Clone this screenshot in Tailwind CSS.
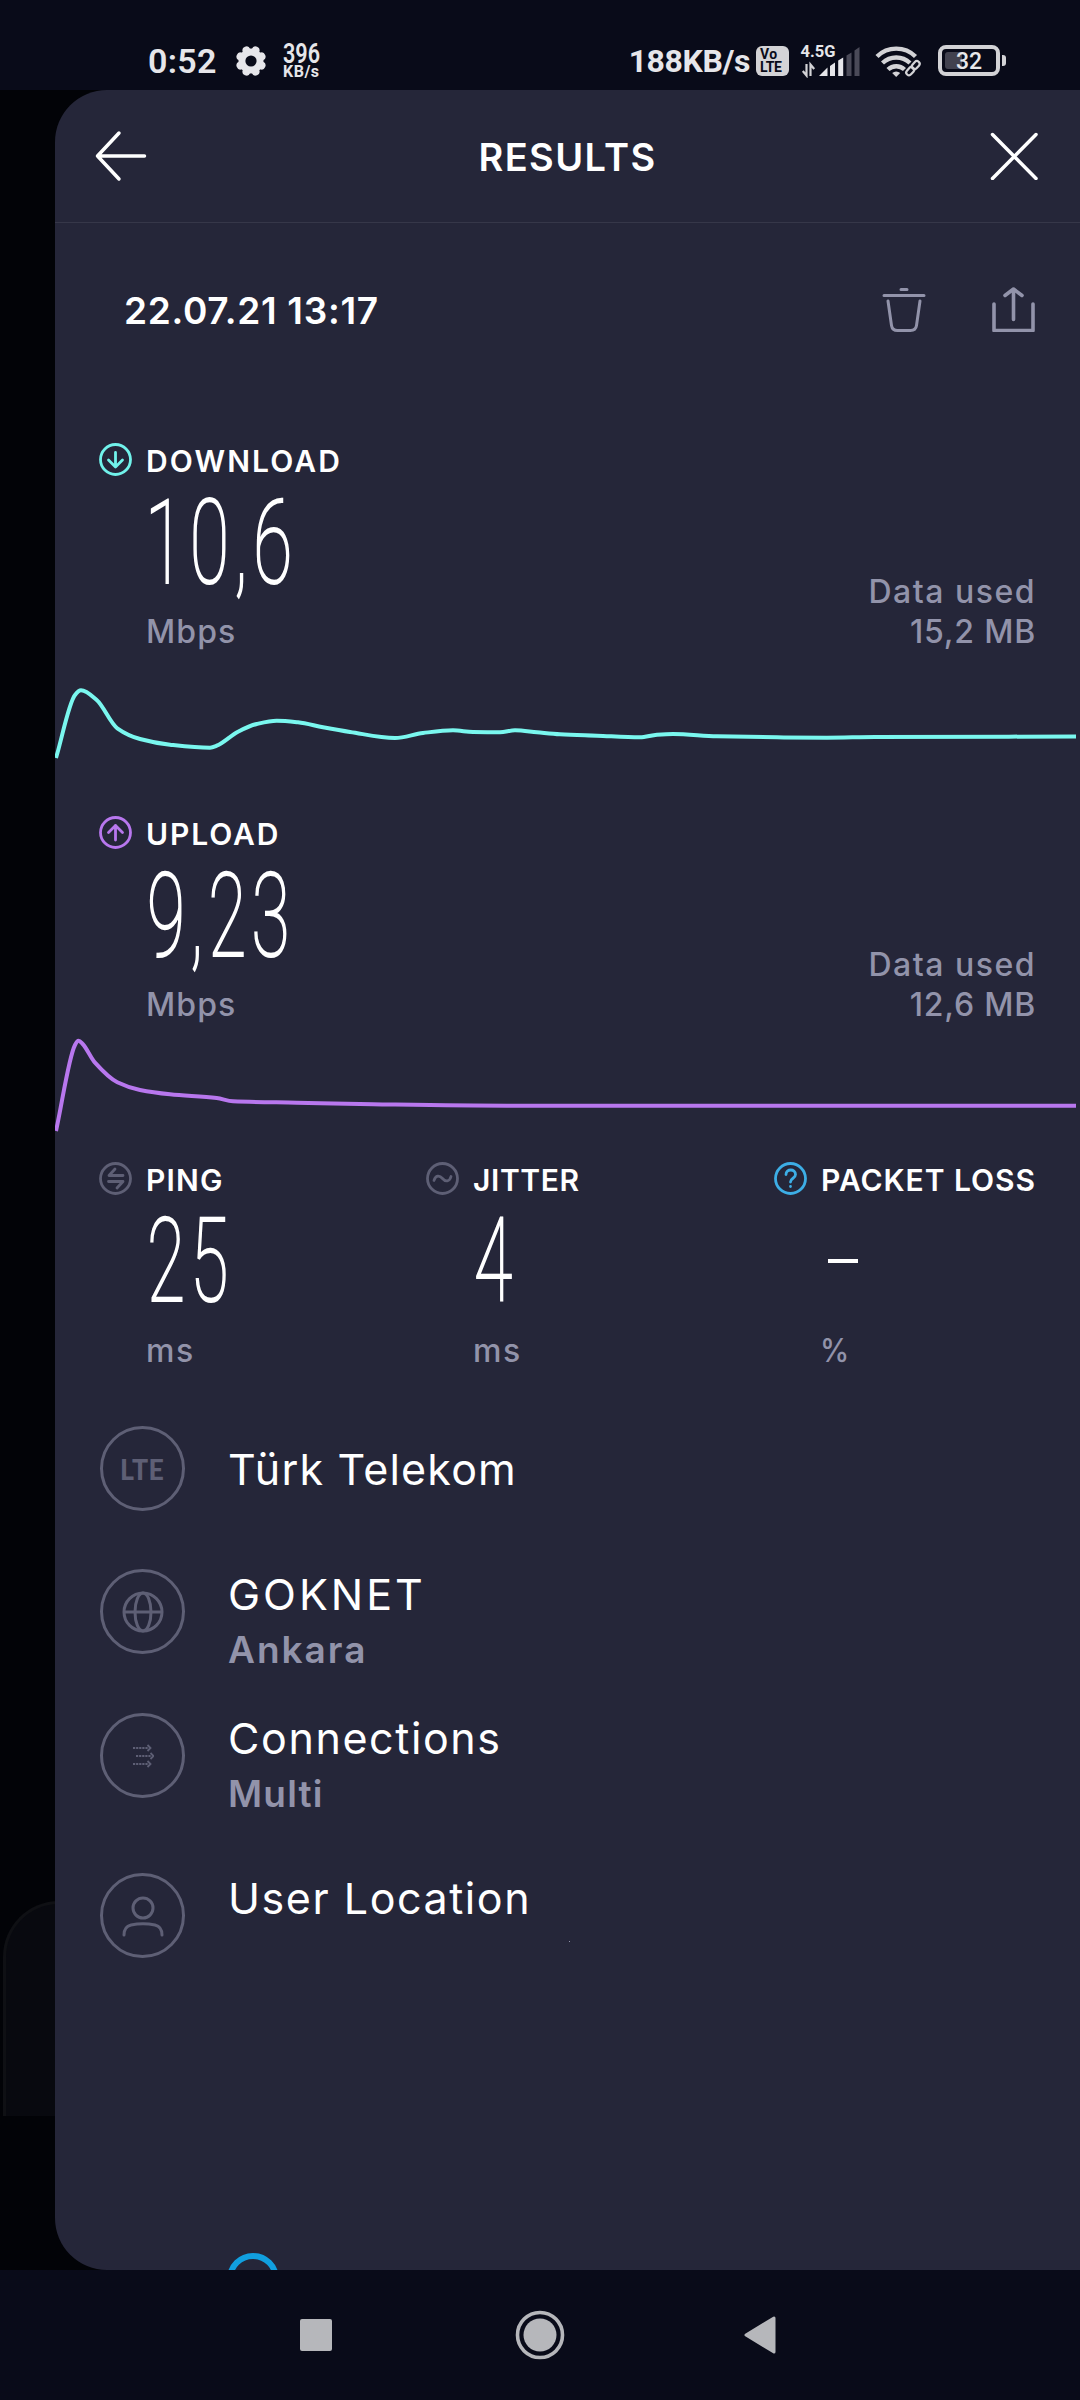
<!DOCTYPE html>
<html lang="en">
<head>
    <meta charset="UTF-8" />
    <meta name="viewport" content="width=device-width, initial-scale=1.0" />
    <title>Results</title>
    <script src="https://cdn.jsdelivr.net/npm/@tailwindcss/browser@4"></script>
</head>
<body class="w-[1080px] h-[2400px] overflow-hidden bg-[#090b19] text-white font-['Inter',sans-serif] flex flex-col">

<!-- Status bar -->
<div class="h-[90px] shrink-0 flex items-center justify-between pt-[31px] pl-[148px] pr-[74px] text-[#e6e6ea] font-['Roboto',sans-serif]">
    <div class="flex items-center">
        <span class="text-[34px] leading-none font-semibold w-[87px] tracking-[0.3px]">0:52</span>
        <svg class="w-8 h-8" viewBox="0 0 32 32">
            <g stroke="#e6e6ea" stroke-width="8" stroke-linecap="round">
                <path d="M11.500 5.500l9 21M20.500 5.500l-9 21M5.500 11.500l21 9M26.500 11.500l-21 9" />
            </g>
            <circle cx="16" cy="16" r="12.500" fill="#e6e6ea" />
            <circle cx="16" cy="16" r="5.600" fill="#090b19" />
        </svg>
        <div class="ml-4 w-[36px] flex flex-col">
            <span class="text-[27px] leading-[22px] font-semibold origin-left scale-x-[0.8]">396</span>
            <span class="text-[16px] leading-[14px] font-bold tracking-[0.5px]">KB/s</span>
        </div>
    </div>

    <div class="flex items-center">
        <span class="text-[32px] leading-none font-bold tracking-[-0.4px]">188KB/s</span>
        <!-- VoLTE -->
        <div class="ml-[6px] w-[33px] h-[30px] rounded-[6px] bg-[#d3d3d6] text-[#090b19] text-[14px] leading-[13px] font-bold flex flex-col justify-center pl-[4px]">
            <span class="tracking-[0.5px]">Vo</span>
            <span class="tracking-[-0.3px]">LTE</span>
        </div>
        <!-- Mobile signal -->
        <svg class="ml-[11px] w-[62px] h-[34px]" viewBox="0 0 62 34">
            <text x="0.500" y="13" font-size="16.500" font-weight="700" fill="#e6e6ea">4.5G</text>
            <g fill="none" stroke="#d3d3d6" stroke-width="2.200">
                <path d="M6.500 20v11.500L2.800 27M10.500 32V20.500l3.700 4.500" />
            </g>
            <path d="M19 32l8.500-8.500V32z" fill="#e6e6ea" />
            <path d="M30 32V22l5-3.500V32zM38.200 32V16.500l5-3V32z" fill="#e6e6ea" />
            <path d="M46.500 32V11.500l5-3V32zM54.500 32V6.500l5-3.500V32z" fill="#4a4a58" />
        </svg>
        <!-- Wifi -->
        <svg class="ml-[13px] w-[50px] h-[34px]" viewBox="0 0 50 34" fill="none" stroke="#d3d3d6">
            <path d="M2 12.500a27.500 27.500 0 0 1 38.500 0M7.500 19a20 20 0 0 1 27.500 0M13 25.500a12 12 0 0 1 16.500 0" stroke-width="4.400" />
            <path d="M21.200 33l-4-4a6 6 0 0 1 8 0z" fill="#d3d3d6" stroke="none" />
            <path d="M34 30l10-10" stroke="#090b19" stroke-width="6" />
            <g stroke-width="2.200">
                <rect x="30.500" y="24.500" width="9" height="5.500" rx="2.700" transform="rotate(-48 35 27)" />
                <rect x="36" y="18.500" width="9" height="5.500" rx="2.700" transform="rotate(-48 40.500 21)" />
            </g>
        </svg>
        <!-- Battery -->
        <div class="ml-[13px] w-[62px] h-[31px] rounded-[8px] border-4 border-[#d3d3d6] p-[3px] relative">
            <div class="w-[17px] h-full rounded-[3px] bg-[#42424f]"></div>
            <span class="absolute inset-0 flex items-center justify-center pt-px text-[23px] leading-none font-medium">32</span>
        </div>
        <div class="ml-[2px] w-[4px] h-[11px] rounded-r-[3px] bg-[#d3d3d6]"></div>
    </div>
</div>

<!-- Main area -->
<main class="h-[2180px] shrink-0 bg-[#020307] pl-[55px] relative">
    <!-- Card of the screen underneath -->
    <div class="absolute left-[3px] top-[1811px] w-[120px] h-[215px] rounded-tl-[56px] border-l-[3px] border-t-[3px] border-[#0f1014] bg-[#08090f]"></div>

    <div class="relative h-full bg-[#252639] rounded-l-[52px] overflow-hidden">
        <header class="h-[133px] flex items-center justify-between pl-[40px] pr-[42px] border-b border-[#363749]">
            <svg class="w-[52px] h-[52px] -mt-px" viewBox="0 0 52 52" fill="none" stroke="#fff" stroke-width="3.500" stroke-linecap="round" stroke-linejoin="round">
                <path d="M49.500 26H2.500M24 3L2.500 26 24 49" />
            </svg>
            <h1 class="text-[38px] leading-none font-semibold tracking-[1.41px] pt-[2px] -ml-[2px]">RESULTS</h1>
            <svg class="w-[48px] h-[48px] -mt-px" viewBox="0 0 48 48" fill="none" stroke="#fff" stroke-width="3.500" stroke-linecap="round">
                <path d="M2.500 2.500l43.500 44M46 2.500L2.500 46.500" />
            </svg>
        </header>

        <div class="mt-[57px] h-[60px] flex items-center pl-[69px] pr-[45px]">
            <span class="flex-1 text-[37px] leading-none font-semibold tracking-[0.7px] pt-px">22.07.21 13:17</span>
            <svg class="w-[44px] h-[45px] -mt-px" viewBox="0 0 44 45" fill="none" stroke="#9293aa" stroke-width="3" stroke-linecap="round" stroke-linejoin="round">
                <path d="M19 2.500h6M2 8.500h40M6 14l3.500 24.500q.8 5 6 5h13q5.200 0 6-5L38 14" />
            </svg>
            <svg class="ml-[66px] w-[43px] h-[45px] -mt-px" viewBox="0 0 43 45" fill="none" stroke="#9293aa" stroke-width="3.600" stroke-linecap="round" stroke-linejoin="round">
                <path d="M2 17v26.500h39V17M21.500 32.500V2.500M13 8.500l8.500-6.500 8.500 6.500" />
            </svg>
        </div>

        <!-- Download -->
        <section class="mt-[102px]">
            <div class="h-[34px] flex items-center gap-[14px] pl-[44px]">
                <svg class="w-[33px] h-[33px]" viewBox="0 0 33 33" fill="none" stroke="#71f2eb" stroke-width="2.800" stroke-linecap="round" stroke-linejoin="round">
                    <circle cx="16.500" cy="16.500" r="15" /><path d="M16.500 9.500v14M9.500 17l7 7 7-7" />
                </svg>
                <h2 class="text-[30px] leading-none font-semibold tracking-[2.1px] pt-[3px]">DOWNLOAD</h2>
            </div>
            <div class="h-[176px] flex justify-between items-end pl-[93px] pr-[44px]">
                <div>
                    <div class="h-[84px] mb-[28px] leading-[86px] text-[116px] tracking-[8.500px] font-thin [-webkit-text-stroke:2.2px_#fff] font-['Roboto',sans-serif] origin-left scale-x-[0.62] -ml-[3px]">10,6</div>
                    <div class="text-[32px] leading-10 font-medium tracking-[1.1px] text-[#9293aa] -ml-[2px]">Mbps</div>
                </div>
                <div class="text-right text-[32px] leading-10 font-medium text-[#9293aa]">
                    <div class="tracking-[1.5px]">Data used</div>
                    <div class="tracking-[0.8px]">15,2 MB</div>
                </div>
            </div>
            <svg class="block w-full h-[163px]" viewBox="0 1 1025 163" fill="none" stroke="#7af7ef" stroke-width="4">
                <path id="downloadLine" />
            </svg>
        </section>

        <!-- Upload -->
        <section>
            <div class="h-[34px] flex items-center gap-[14px] pl-[44px]">
                <svg class="w-[33px] h-[33px]" viewBox="0 0 33 33" fill="none" stroke="#b877ee" stroke-width="2.800" stroke-linecap="round" stroke-linejoin="round">
                    <circle cx="16.500" cy="16.500" r="15" /><path d="M16.500 24V9.500M9.500 16.500l7-7 7 7" />
                </svg>
                <h2 class="text-[30px] leading-none font-semibold tracking-[1.9px] pt-[3px]">UPLOAD</h2>
            </div>
            <div class="h-[176px] flex justify-between items-end pl-[93px] pr-[44px]">
                <div>
                    <div class="h-[84px] mb-[28px] leading-[86px] text-[116px] tracking-[8.500px] font-thin [-webkit-text-stroke:2.2px_#fff] font-['Roboto',sans-serif] origin-left scale-x-[0.6] -ml-px">9,23</div>
                    <div class="text-[32px] leading-10 font-medium tracking-[1.1px] text-[#9293aa] -ml-[2px]">Mbps</div>
                </div>
                <div class="text-right text-[32px] leading-10 font-medium text-[#9293aa]">
                    <div class="tracking-[1.5px]">Data used</div>
                    <div class="tracking-[0.8px]">12,6 MB</div>
                </div>
            </div>
            <svg class="block w-full h-[136px]" viewBox="0 1 1025 136" fill="none" stroke="#b877ee" stroke-width="4">
                <path id="uploadLine" />
            </svg>
        </section>

        <!-- Ping / jitter / packet loss -->
        <section class="grid grid-cols-[327px_348px_1fr] pl-[44px]">
            <div>
                <div class="h-[34px] flex items-center gap-[14px]">
                    <svg class="w-[33px] h-[33px]" viewBox="0 0 33 33" fill="none" stroke="#5e5f75" stroke-width="2.800" stroke-linecap="round" stroke-linejoin="round">
                        <circle cx="16.500" cy="16.500" r="15" /><path d="M24 13.500H10l6-6.500M9.500 19.500H24l-6 6.500" />
                    </svg>
                    <h2 class="text-[30px] leading-none font-semibold tracking-[1.2px] pt-[3px]">PING</h2>
                </div>
                <div class="mt-[24px] ml-[48px] h-[84px] leading-[84px] text-[116px] tracking-[8.500px] font-thin [-webkit-text-stroke:2.2px_#fff] font-['Roboto',sans-serif] origin-left scale-x-[0.6]">25</div>
                <div class="mt-[28px] ml-[47px] text-[32px] leading-10 font-medium tracking-[1.6px] text-[#9293aa]">ms</div>
            </div>
            <div>
                <div class="h-[34px] flex items-center gap-[14px]">
                    <svg class="w-[33px] h-[33px]" viewBox="0 0 33 33" fill="none" stroke="#5e5f75" stroke-width="2.800" stroke-linecap="round">
                        <circle cx="16.500" cy="16.500" r="15" /><path d="M8 18.500c1.500-5.500 5.500-5.500 8.500-2s7 3.500 8.500-2" />
                    </svg>
                    <h2 class="text-[30px] leading-none font-semibold tracking-[0.6px] pt-[3px]">JITTER</h2>
                </div>
                <div class="mt-[24px] ml-[48px] h-[84px] leading-[84px] text-[116px] font-thin [-webkit-text-stroke:2.2px_#fff] font-['Roboto',sans-serif] origin-left scale-x-[0.6]">4</div>
                <div class="mt-[28px] ml-[47px] text-[32px] leading-10 font-medium tracking-[1.6px] text-[#9293aa]">ms</div>
            </div>
            <div>
                <div class="h-[34px] flex items-center gap-[14px]">
                    <svg class="w-[33px] h-[33px]" viewBox="0 0 33 33" fill="none" stroke="#3daee6" stroke-width="2.800" stroke-linecap="round">
                        <circle cx="16.500" cy="16.500" r="15" /><path d="M12 12.500c0-6 9.500-6 9.500 0 0 4-5 3.500-5 7.500M16.500 24.500v.1" />
                    </svg>
                    <h2 class="text-[30px] leading-none font-semibold tracking-[0.95px] pt-[3px] whitespace-nowrap">PACKET LOSS</h2>
                </div>
                <div class="mt-[24px] ml-[54px] h-[84px] flex items-center"><span class="w-[30px] h-[4px] bg-white"></span></div>
                <div class="mt-[28px] ml-[46px] text-[32px] leading-10 font-medium text-[#9293aa]"><span class="inline-block origin-left scale-x-[0.92]">%</span></div>
            </div>
        </section>

        <!-- Connection details -->
        <ul class="mt-[55px] pl-[45px] text-[43px] leading-14">
            <li class="h-[143px] flex gap-[43px]">
                <div class="w-[85px] h-[85px] shrink-0 rounded-full border-3 border-[#5e5f75] flex items-center justify-center text-[29px] leading-none font-black tracking-[0.5px] text-[#5e5f75] font-['Lato',sans-serif]"><span class="scale-x-[0.92]">LTE</span></div>
                <p class="mt-[15px] tracking-[1.2px]">Türk Telekom</p>
            </li>
            <li class="h-[144px] flex gap-[43px]">
                <div class="w-[85px] h-[85px] shrink-0 rounded-full border-3 border-[#5e5f75] flex items-center justify-center">
                    <svg class="w-[42px] h-[42px]" viewBox="0 0 42 42" fill="none" stroke="#5e5f75" stroke-width="3">
                        <circle cx="21" cy="21" r="19" /><ellipse cx="21" cy="21" rx="8" ry="19" /><path d="M2 21h38" />
                    </svg>
                </div>
                <div class="-mt-[3px]">
                    <p class="tracking-[3px]">GOKNET</p>
                    <p class="text-[37px] leading-14 font-semibold tracking-[2px] text-[#9293aa]">Ankara</p>
                </div>
            </li>
            <li class="h-[160px] flex gap-[43px]">
                <div class="w-[85px] h-[85px] shrink-0 rounded-full border-3 border-[#5e5f75] flex items-center justify-center">
                    <svg class="w-[22px] h-[24px]" viewBox="0 0 22 24" fill="none" stroke="#5e5f75" stroke-width="1.800">
                        <path d="M1 4h15M4 12h15M1 20h15" stroke-dasharray="2.200 .9" />
                        <path d="M15.500 1l3 3-3 3M18.500 9l3 3-3 3M15.500 17l3 3-3 3" />
                    </svg>
                </div>
                <div class="-mt-[3px]">
                    <p class="tracking-[1.6px]">Connections</p>
                    <p class="text-[37px] leading-14 font-semibold tracking-[1.2px] text-[#9293aa]">Multi</p>
                </div>
            </li>
            <li class="flex gap-[43px]">
                <div class="w-[85px] h-[85px] shrink-0 rounded-full border-3 border-[#5e5f75] flex items-center justify-center">
                    <svg class="w-[42px] h-[42px]" viewBox="0 0 42 42" fill="none" stroke="#5e5f75" stroke-width="3" stroke-linecap="round">
                        <circle cx="21" cy="13" r="10" /><path d="M2 40c0-7 3-9 7-10q12-2.500 24 0c4 1 7 3 7 10" />
                    </svg>
                </div>
                <p class="-mt-[3px] tracking-[1.55px]">User Location</p>
            </li>
        </ul>

        <!-- Ring peeking in from below the fold -->
        <div class="absolute left-[172px] top-[2163px] w-[52px] h-[52px] rounded-full border-[6px] border-[#119fdf]"></div>
        <div class="absolute left-[514px] top-[1851px] w-px h-px bg-[#9293aa]"></div>
    </div>
</main>

<!-- Navigation bar -->
<nav class="flex-1 flex items-center pl-[300px]">
    <div class="w-[32px] h-[32px] rounded-[2px] bg-[#b6b7bb]"></div>
    <svg class="ml-[183px] w-[50px] h-[50px]" viewBox="0 0 50 50">
        <circle cx="25" cy="25" r="22.500" fill="none" stroke="#b6b7bb" stroke-width="3.600" /><circle cx="25" cy="25" r="16.500" fill="#b6b7bb" />
    </svg>
    <svg class="ml-[179px] w-[32px] h-[38px]" viewBox="0 0 32 38">
        <path d="M2 19L30 2v34z" fill="#b6b7bb" stroke="#b6b7bb" stroke-width="3" stroke-linejoin="round" />
    </svg>
</nav>

<script>
    const download = [[1,107],[20,44],[26,39.3],[41.7,49],[62.3,77.3],[85,88],[115,93.7],[155,96.7],[161.7,94.7],[183,80.7],[201.7,73],[221.7,69.7],[243,71.3],[268,76.3],[295,81],[340,87],[368,82],[398,79.3],[418,81],[445,81.3],[460,79.3],[482,81.3],[505,83.3],[542,84.7],[585,86.3],[602,83.7],[618,83],[662,85.3],[722,86.3],[772,86.7],[820,86],[1021,85.5]];
    const upload = [[1,107],[20,21],[23.5,16.7],[27.7,20],[40,38.7],[62.3,58.3],[85,66],[115,70.3],[161.7,74],[178,77.3],[241.7,78.7],[318,80.3],[452,81.7],[1021,81.7]];

    // Smooth curve through all points; tangents stay within the neighbouring steps
    function linePath(pts) {
        const slope = (a, b) => (b[1] - a[1]) / (b[0] - a[0]);
        const m = pts.map((p, i) => {
            if (i === 0) return slope(p, pts[1]);
            if (i === pts.length - 1) return slope(pts[i - 1], p);
            const s0 = slope(pts[i - 1], p);
            const s1 = slope(p, pts[i + 1]);
            return s0 * s1 <= 0 ? 0 : (2 * s0 * s1) / (s0 + s1);
        });
        let d = `M${pts[0]}`;
        for (let i = 1; i < pts.length; i++) {
            const [x0, y0] = pts[i - 1];
            const [x1, y1] = pts[i];
            const h = (x1 - x0) / 3;
            d += `C${x0 + h},${y0 + m[i - 1] * h} ${x1 - h},${y1 - m[i] * h} ${x1},${y1}`;
        }
        return d;
    }

    document.getElementById('downloadLine').setAttribute('d', linePath(download));
    document.getElementById('uploadLine').setAttribute('d', linePath(upload));
</script>
</body>
</html>
